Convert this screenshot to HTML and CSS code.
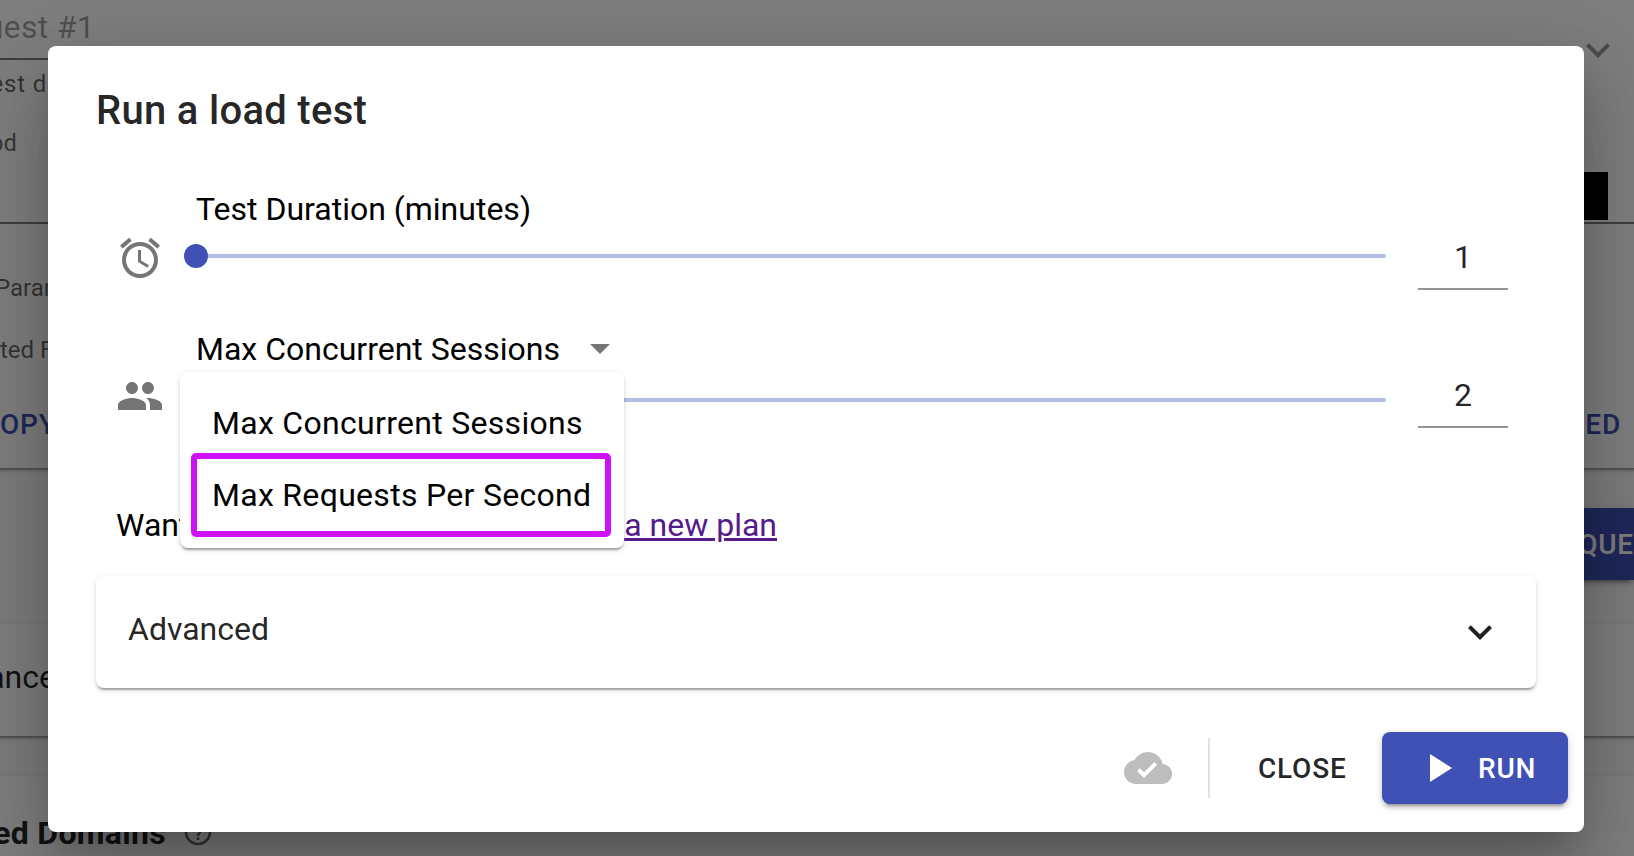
FILE: index.html
```html
<!DOCTYPE html>
<html lang="en">
<head>
<meta charset="utf-8">
<title>Run a load test</title>
<link rel="stylesheet" href="styles.css">
</head>
<body>
<div class="page">
  <section class="card request-card">
    <div class="request-head">
      <div class="cut field-name">uest #1</div>
      <svg class="icon head-chevron" viewBox="0 0 24 24"><path d="M16.59 8.59L12 13.17 7.41 8.59 6 10l6 6 6-6z"/></svg>
    </div>
    <div class="cut helper">est d</div>
    <div class="cut method-label">od</div>
    <div class="method-row"><div class="dark-box"></div></div>
    <div class="params">Param</div>
    <div class="related">ted F</div>
    <div class="card-actions"><span>OPY</span><span>ED</span></div>
  </section>
  <div class="add-row"><div class="add-button">QUE</div></div>
  <section class="card advanced-back"><div class="cut advanced-word">ance</div></section>
  <section class="card domains">
    <div class="cut domains-title">ed Domains</div>
    <svg class="help" viewBox="0 0 24 24"><path d="M11 18h2v-2h-2v2zm1-16C6.48 2 2 6.48 2 12s4.48 10 10 10 10-4.48 10-10S17.52 2 12 2zm0 18c-4.41 0-8-3.59-8-8s3.59-8 8-8 8 3.59 8 8-3.59 8-8 8zm0-14c-2.21 0-4 1.79-4 4h2c0-1.1.9-2 2-2s2 .9 2 2c0 2-3 1.75-3 5h2c0-2.25 3-2.5 3-5 0-2.21-1.79-4-4-4z"/></svg>
  </section>
</div>

<div class="scrim">
  <div class="dialog">
    <h2 class="title">Run a load test</h2>
    <div class="row duration">
      <svg class="icon" viewBox="0 0 24 24"><path d="M22 5.72l-4.6-3.86-1.29 1.53 4.6 3.86L22 5.72zM7.88 3.39L6.6 1.86 2 5.71l1.29 1.53 4.59-3.85zM12.5 8H11v6l4.75 2.85.75-1.23-4-2.37V8zM12 4c-4.97 0-9 4.03-9 9s4.02 9 9 9c4.97 0 9-4.03 9-9s-4.03-9-9-9zm0 16c-3.87 0-7-3.13-7-7s3.13-7 7-7 7 3.13 7 7-3.13 7-7 7z"/></svg>
      <div class="row-body">
        <div class="label">Test Duration (minutes)</div>
        <div class="slider"><span class="thumb"></span></div>
      </div>
      <div class="number">1</div>
    </div>
    <div class="row sessions">
      <svg class="icon" viewBox="0 0 24 24"><path d="M16 11c1.66 0 2.99-1.34 2.99-3S17.66 5 16 5c-1.66 0-3 1.34-3 3s1.34 3 3 3zm-8 0c1.66 0 2.99-1.34 2.99-3S9.66 5 8 5C6.34 5 5 6.34 5 8s1.34 3 3 3zm0 2c-2.33 0-7 1.17-7 3.5V19h14v-2.5c0-2.33-4.67-3.5-7-3.5zm8 0c-.29 0-.62.02-.97.05 1.16.84 1.97 1.97 1.97 3.45V19h6v-2.5c0-2.33-4.67-3.5-7-3.5z"/></svg>
      <div class="row-body">
        <div class="label select">
          <span>Max Concurrent Sessions</span>
          <svg class="arrow" viewBox="0 0 20 10"><path d="M0 0l10 10L20 0z"/></svg>
        </div>
        <div class="slider"></div>
        <div class="menu">
          <div class="option">Max Concurrent Sessions</div>
          <div class="option marked">Max Requests Per Second</div>
        </div>
      </div>
      <div class="number">2</div>
    </div>
    <div class="upsell"><span>Want</span><a class="plan">a new plan</a></div>
    <div class="advanced">
      <span>Advanced</span>
      <svg class="icon" viewBox="0 0 24 24"><path d="M16.59 8.59L12 13.17 7.41 8.59 6 10l6 6 6-6z"/></svg>
    </div>
    <div class="actions">
      <svg class="icon cloud" viewBox="0 0 24 24"><path d="M19.35 10.04C18.67 6.59 15.64 4 12 4 9.11 4 6.6 5.64 5.35 8.04 2.34 8.36 0 10.91 0 14c0 3.31 2.69 6 6 6h13c2.76 0 5-2.24 5-5 0-2.64-2.05-4.78-4.65-4.96zM10 17l-3.5-3.5 1.41-1.41L10 14.17 15.18 9l1.41 1.41L10 17z"/></svg>
      <div class="divider"></div>
      <div class="close">CLOSE</div>
      <div class="run">
        <svg class="play" viewBox="0 0 22 28"><path d="M0 0v28l22-14z"/></svg>
        <span class="run-text">RUN</span>
      </div>
    </div>
  </div>
</div>
</body>
</html>
```
FILE: styles.css
```css
*, *::before, *::after { box-sizing: border-box; }
body {
  margin: 0;
  width: 1634px;
  height: 856px;
  overflow: hidden;
  position: relative;
  font-family: Roboto, "Liberation Sans", sans-serif;
  font-size: 32px;
  line-height: 32px;
  color: #000;
  background: #fafafa;
}
svg { display: block; fill: currentColor; flex: none; }
.icon { width: 48px; height: 48px; }

/* page under the dialog */
.page { height: 856px; overflow: hidden; color: rgba(0,0,0,.6); }
.card {
  margin: 0 -16px;
  padding: 0 16px;
  background: #fff;
  box-shadow: 0 4px 2px -2px rgba(0,0,0,.2), 0 2px 2px rgba(0,0,0,.14), 0 2px 6px rgba(0,0,0,.12);
}
.cut { display: flex; justify-content: flex-end; white-space: nowrap; }
.request-card { height: 468px; padding-top: 11px; }
.request-head { display: flex; justify-content: space-between; height: 49px; padding-right: 12px; }
.field-name { width: 95px; letter-spacing: .3px; color: rgba(0,0,0,.38); border-bottom: 2px solid rgba(0,0,0,.5); }
.head-chevron { margin-top: 15px; color: rgba(0,0,0,.4); }
.helper, .method-label, .params, .related { font-size: 23px; line-height: 24px; letter-spacing: .3px; }
.helper { width: 47px; margin-top: 12px; font-size: 24px; letter-spacing: .8px; }
.method-label { width: 17px; margin-top: 36px; }
.method-row { height: 68px; padding-top: 16px; border-bottom: 2px solid rgba(0,0,0,.5); }
.dark-box { width: 100px; height: 48px; margin-left: 1508px; background: #000; }
.params { margin: 52px 0 0 -5px; font-size: 24px; letter-spacing: 0; }
.related { margin-top: 38px; font-size: 24px; letter-spacing: 0; }
.card-actions {
  display: flex; justify-content: space-between;
  margin: 49px 13px 0 0; line-height: 28px;
  font-size: 28px; font-weight: 500; letter-spacing: .8px; color: #3f51b5;
}
.add-row { height: 156px; padding-top: 40px; display: flex; justify-content: flex-end; }
.add-button {
  width: 160px; height: 72px; text-align: right; line-height: 74px;
  background: #3f51b5; color: #fff; font-size: 28px; font-weight: 500; letter-spacing: .8px;
  box-shadow: 0 6px 2px -4px rgba(0,0,0,.2), 0 4px 4px rgba(0,0,0,.14), 0 2px 10px rgba(0,0,0,.12);
}
.advanced-back { height: 112px; padding-top: 37px; color: rgba(0,0,0,.87); }
.advanced-word { width: 56px; }
.domains { display: flex; height: 120px; margin-top: 40px; padding-top: 41px; color: rgba(0,0,0,.87); }
.domains-title { width: 166px; font-weight: 700; letter-spacing: .3px; }
.help { width: 32px; height: 32px; margin: -1px 0 0 16px; opacity: .65; }

/* dialog */
.scrim { position: absolute; inset: 0; padding: 46px 48px; background: rgba(0,0,0,.5); }
.dialog {
  position: relative;
  width: 1536px; height: 786px; padding: 45px 48px 28px;
  border-radius: 8px; background: #fff;
  box-shadow: 0 22px 30px -14px rgba(0,0,0,.2), 0 48px 76px 6px rgba(0,0,0,.14), 0 18px 92px 16px rgba(0,0,0,.12);
}
.title { margin: 0 0 62px; font-size: 40px; line-height: 40px; font-weight: 500; letter-spacing: .3px; color: rgba(0,0,0,.87); }
.row { display: flex; align-items: flex-start; padding-left: 20px; }
.row > .icon { color: rgba(0,0,0,.54); }
.duration { height: 140px; }
.duration > .icon { margin-top: 41px; }
.sessions { height: 176px; }
.sessions > .icon { margin-top: 39px; }
.row-body { position: relative; width: 1190px; margin: 0 32px; }
.label { height: 32px; }
.slider { display: flex; align-items: center; height: 24px; margin-top: 19px; }
.slider::after { content: ""; width: 1190px; height: 4px; border-radius: 2px; background: #b6bde3; }
.sessions .slider { margin-top: 23px; }
.thumb { width: 24px; height: 24px; flex: none; margin: 0 -12px; border-radius: 50%; background: #3f51b5; z-index: 1; }
.number {
  width: 90px; height: 49px; margin-top: 48px; text-align: center;
  color: rgba(0,0,0,.87); border-bottom: 2px solid #949494;
}
.sessions .number { margin-top: 46px; }
.select { display: flex; }
.arrow { width: 20px; height: 10px; margin: 11px 0 0 30px; color: #757575; }
.menu {
  position: absolute; left: -16px; top: 39px; z-index: 2;
  width: 444px; height: 176px; padding: 16px 0;
  border-radius: 8px; background: #fff;
  box-shadow: 0 4px 2px -2px rgba(0,0,0,.2), 0 2px 2px rgba(0,0,0,.14), 0 2px 6px rgba(0,0,0,.12);
}
.option { position: relative; height: 72px; padding-left: 32px; line-height: 70px; letter-spacing: .3px; }
.marked::after {
  content: ""; position: absolute; left: 11px; top: -7px; width: 420px; height: 84px;
  border: 6px solid #cf0ff5; border-radius: 5px;
}
.upsell { display: flex; justify-content: space-between; width: 681px; height: 67px; padding-left: 20px; }
.plan { height: 32px; color: #551a8b; text-decoration: underline; }
.advanced {
  display: flex; justify-content: space-between; align-items: flex-start;
  height: 112px; padding: 32px 32px 0 32px; margin: 0 0 44px; width: 1440px;
  border-radius: 8px; color: rgba(0,0,0,.87); line-height: 42px;
  box-shadow: 0 4px 2px -2px rgba(0,0,0,.2), 0 2px 2px rgba(0,0,0,.14), 0 2px 6px rgba(0,0,0,.12);
}
.actions {
  display: flex; align-items: center; justify-content: flex-end;
  height: 72px; margin-right: -32px; line-height: 72px; font-size: 28px; font-weight: 500; letter-spacing: .8px;
}
.cloud { color: #bdbdbd; }
.divider { width: 2px; height: 60px; margin-left: 36px; background: #e0e0e0; }
.close { width: 172px; padding: 1px 0 0 48px; color: rgba(0,0,0,.87); }
.run {
  display: flex; align-items: center; width: 186px; height: 72px; padding-left: 48px;
  border-radius: 8px; background: #3f51b5; color: #fff;
  box-shadow: 0 6px 2px -4px rgba(0,0,0,.2), 0 4px 4px rgba(0,0,0,.14), 0 2px 10px rgba(0,0,0,.12);
}
.play { width: 22px; height: 28px; margin-right: 26px; }
.run-text { padding-top: 1px; }
```
